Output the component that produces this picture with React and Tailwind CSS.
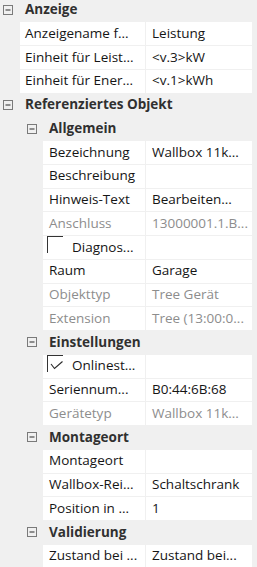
const rows = [
  { h: true, lvl: 0, label: "Anzeige" },
  { lvl: 0, label: "Anzeigename f...", value: "Leistung" },
  { lvl: 0, label: "Einheit für Leist...", value: "<v.3>kW" },
  { lvl: 0, label: "Einheit für Ener...", value: "<v.1>kWh" },
  { h: true, lvl: 0, label: "Referenziertes Objekt" },
  { h: true, lvl: 1, label: "Allgemein" },
  { lvl: 1, label: "Bezeichnung", value: "Wallbox 11k..." },
  { lvl: 1, label: "Beschreibung", value: "" },
  { lvl: 1, label: "Hinweis-Text", value: "Bearbeiten..." },
  { lvl: 1, label: "Anschluss", value: "13000001.1.B...", off: true },
  { lvl: 1, label: "Diagnos...", value: "", check: "empty" },
  { lvl: 1, label: "Raum", value: "Garage" },
  { lvl: 1, label: "Objekttyp", value: "Tree Gerät", off: true },
  { lvl: 1, label: "Extension", value: "Tree (13:00:0...", off: true },
  { h: true, lvl: 1, label: "Einstellungen" },
  { lvl: 1, label: "Onlinest...", value: "", check: "on" },
  { lvl: 1, label: "Seriennum...", value: "B0:44:6B:68" },
  { lvl: 1, label: "Gerätetyp", value: "Wallbox 11k...", off: true },
  { h: true, lvl: 1, label: "Montageort" },
  { lvl: 1, label: "Montageort", value: "" },
  { lvl: 1, label: "Wallbox-Rei...", value: "Schaltschrank" },
  { lvl: 1, label: "Position in ...", value: "1" },
  { h: true, lvl: 1, label: "Validierung" },
  { lvl: 1, label: "Zustand bei ...", value: "Zustand bei..." },
];

function Toggle() {
  return (
    <svg width="10" height="10" viewBox="0 0 10 10" className="shrink-0">
      <rect x="0.5" y="0.5" width="9" height="9" fill="none" stroke="#7a7a7a" />
      <line x1="2.5" y1="5" x2="7.5" y2="5" stroke="#2a2a2a" />
    </svg>
  );
}

function Check({ on }) {
  return (
    <div className="relative h-[17px] w-[16px] shrink-0 self-start border-l border-t border-[#333]">
      {on && (
        <svg width="14" height="12" viewBox="0 0 14 12" className="absolute left-[2px] top-[3px]">
          <path d="M1 5 L4.5 9.5 L12.5 2.5" fill="none" stroke="#2a2a2a" strokeWidth="1.1" />
        </svg>
      )}
    </div>
  );
}

function Row({ r }) {
  if (r.h) {
    return (
      <div
        className={
          "flex h-[22.75px] items-center gap-[12px] " +
          (r.lvl === 0 ? "pl-[3px]" : "pl-[27px]")
        }
      >
        <Toggle />
        <span className="font-bold text-[#303030]">{r.label}</span>
      </div>
    );
  }
  const color = r.off ? "text-[#8d8d8d]" : "text-[#151515]";
  const labelPad = r.check ? "pl-[4px]" : r.lvl === 0 ? "pl-[5px]" : "pl-[6px]";
  return (
    <div className={"flex h-[22.75px] gap-px pr-[5px] " + (r.lvl === 0 ? "pl-[20px]" : "pl-[43px]")}>
      <div
        className={
          "flex h-full shrink-0 items-center overflow-hidden whitespace-nowrap bg-white " +
          color +
          " " +
          labelPad +
          (r.lvl === 0 ? " w-[125px]" : " w-[102px]")
        }
      >
        {r.check && <Check on={r.check === "on"} />}
        <span className={r.check ? "ml-[9px]" : ""}>{r.label}</span>
      </div>
      <div className={"flex h-full flex-1 items-center overflow-hidden whitespace-nowrap bg-white pl-[6px] " + color}>
        {r.value}
      </div>
    </div>
  );
}

export default function App() {
  return (
    <div
      className="h-[567px] w-[257px] overflow-hidden bg-[#f0f0f0] text-[13.5px] leading-none"
      style={{ fontFamily: '"Open Sans", "Noto Sans", sans-serif' }}
    >
      <div className="-mt-[1.5px] flex flex-col gap-px">
        {rows.map((r, i) => (
          <Row key={i} r={r} />
        ))}
      </div>
    </div>
  );
}
